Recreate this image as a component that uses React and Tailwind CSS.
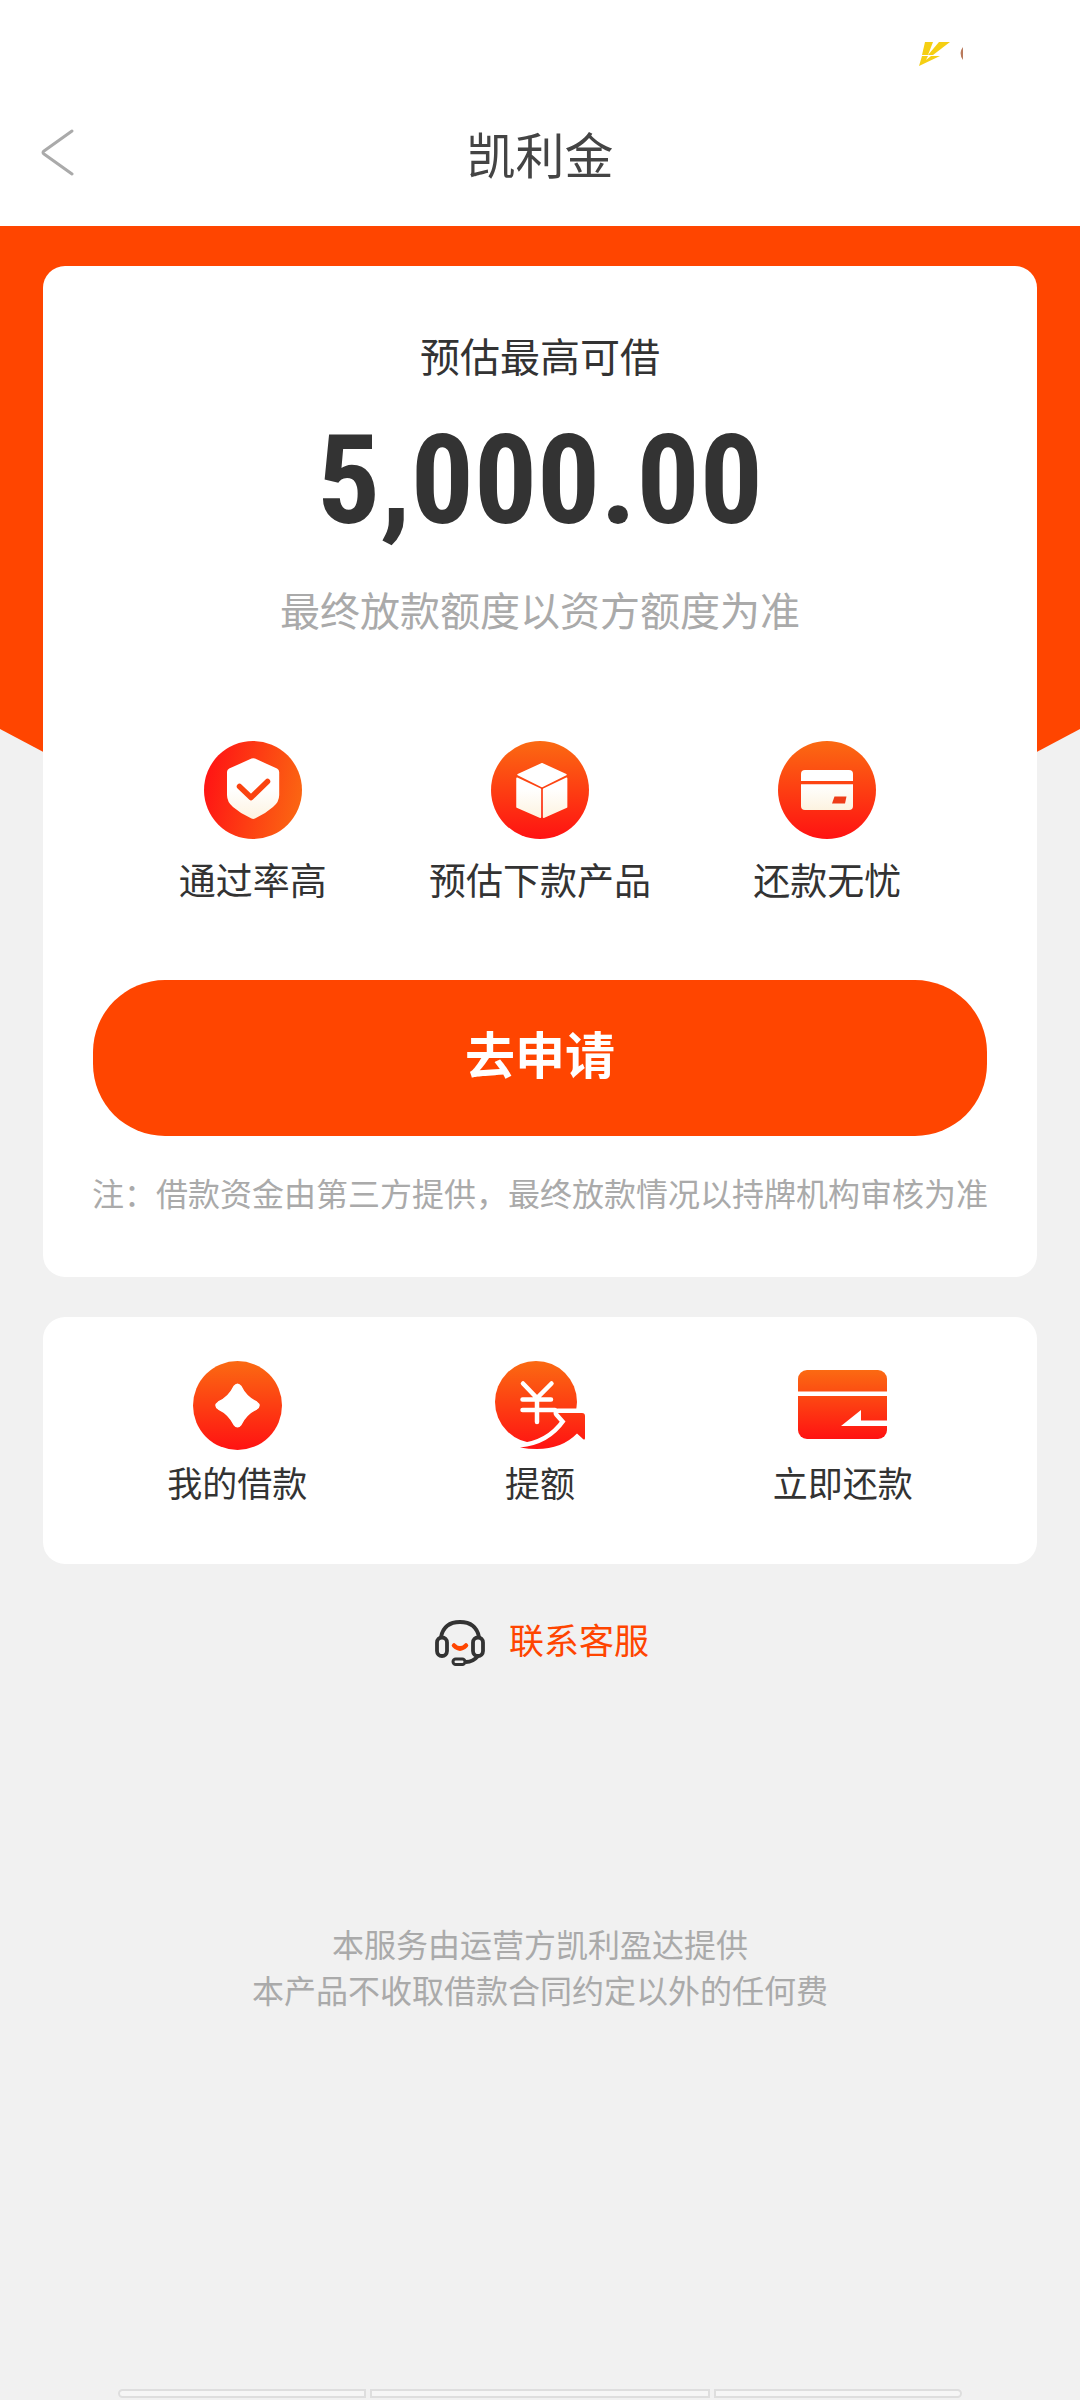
const features = [
  { label: "通过率高", Icon: ShieldIcon },
  { label: "预估下款产品", Icon: BoxIcon },
  { label: "还款无忧", Icon: CardIcon },
];

const shortcuts = [
  { label: "我的借款", Icon: CoinIcon },
  { label: "提额", Icon: RaiseIcon },
  { label: "立即还款", Icon: RepayIcon },
];

function ShieldIcon() {
  return (
    <svg className="size-[98px]" viewBox="0 0 98 98" aria-hidden="true">
      <defs>
        <linearGradient id="shieldBg" x1="0" y1="0.4" x2="1" y2="0.6">
          <stop offset="0" stopColor="#ff1414" />
          <stop offset="1" stopColor="#fb6612" />
        </linearGradient>
        <linearGradient id="shieldFg" x1="0" y1="0" x2="0" y2="1">
          <stop offset="0.5" stopColor="#fff" />
          <stop offset="1" stopColor="#fdf3e0" />
        </linearGradient>
      </defs>
      <circle cx="49" cy="49" r="49" fill="url(#shieldBg)" />
      <path
        d="M47.5 17.6Q49.2 16.8 51 17.6L73 27.5Q75.2 28.6 75.2 31V54Q75.2 61 69 66Q61 73 51 77.6Q49.2 78.5 47.5 77.6Q37 73 29 66Q23 61 23 54V31Q23 28.6 25.2 27.5Z"
        fill="url(#shieldFg)"
      />
      <path d="M35.5 45.5L47 56.5L63.5 40.5" fill="none" stroke="#fa4310" strokeWidth="5.5" strokeLinecap="round" strokeLinejoin="round" />
    </svg>
  );
}

function BoxIcon() {
  return (
    <svg className="size-[98px]" viewBox="0 0 98 98" aria-hidden="true">
      <defs>
        <linearGradient id="boxBg" x1="0" y1="0" x2="0" y2="1">
          <stop offset="0" stopColor="#fb6a12" />
          <stop offset="1" stopColor="#ff1212" />
        </linearGradient>
        <linearGradient id="boxFg" x1="0" y1="35" x2="0" y2="77" gradientUnits="userSpaceOnUse">
          <stop offset="0.3" stopColor="#fff" />
          <stop offset="1" stopColor="#fdf3e0" />
        </linearGradient>
      </defs>
      <circle cx="49" cy="49" r="49" fill="url(#boxBg)" />
      <g fill="url(#boxFg)" stroke="url(#boxFg)" strokeWidth="1.5" strokeLinejoin="round">
        <path d="M51 22.8L75 33.7L51 45.5L27 33.7Z" />
        <path d="M26 37.3L49.4 48.3V76.3L26 66Z" />
        <path d="M75.6 37.3L52.6 48.3V76.3L75.6 66Z" />
      </g>
    </svg>
  );
}

function CardIcon() {
  return (
    <svg className="size-[98px]" viewBox="0 0 98 98" aria-hidden="true">
      <defs>
        <linearGradient id="cardFg" x1="0" y1="0" x2="0" y2="1">
          <stop offset="0" stopColor="#fff" />
          <stop offset="1" stopColor="#fdf3e0" />
        </linearGradient>
      </defs>
      <circle cx="49" cy="49" r="49" fill="url(#boxBg)" />
      <path d="M23 40V33Q23 29 27 29H71Q75 29 75 33V40Z" fill="#fff" />
      <path d="M23 43.3H75V65Q75 69 71 69H27Q23 69 23 65Z" fill="url(#cardFg)" />
      <path d="M56.5 55.5H68.5L67 62.5H54Z" fill="#ee3c18" />
    </svg>
  );
}

function CoinIcon() {
  return (
    <svg className="size-[89px]" viewBox="0 0 89 89" aria-hidden="true">
      <circle cx="44.5" cy="44.5" r="44.5" fill="url(#boxBg)" />
      <path
        d="M41 25.5Q44.5 21 48 25.5Q53 36 63.5 41Q68.500 44.5 63.5 48Q53 53 48 63.5Q44.5 68 41 63.5Q36 53 25.5 48Q20.5 44.5 25.5 41Q36 36 41 25.5Z"
        fill="#fff"
        stroke="#fff"
        strokeWidth="1.5"
      />
    </svg>
  );
}

function RaiseIcon() {
  return (
    <svg className="h-[89px] w-[90px]" viewBox="0 0 90 89" aria-hidden="true">
      <defs>
        <linearGradient id="raiseBg" x1="0" y1="0" x2="0" y2="89" gradientUnits="userSpaceOnUse">
          <stop offset="0" stopColor="#fb6a12" />
          <stop offset="1" stopColor="#ff1212" />
        </linearGradient>
      </defs>
      <circle cx="41" cy="41" r="41" fill="url(#raiseBg)" />
      <path
        d="M63 52H87Q90 52 90 55V77Q90 79.5 88 78L82 72.5Q62 93 25 86.5Q54 84 70.5 60.5Z"
        fill="none"
        stroke="#fff"
        strokeWidth="9"
        strokeLinejoin="round"
      />
      <path d="M63 52H87Q90 52 90 55V77Q90 79.5 88 78L82 72.5Q62 93 25 86.5Q54 84 70.5 60.5Z" fill="url(#raiseBg)" />
      <path
        d="M28 22.5L42 37L56.5 22.5M27.5 38.5H56M27.5 49H60M42 38V61"
        fill="none"
        stroke="#fff"
        strokeWidth="4.5"
        strokeLinecap="round"
      />
    </svg>
  );
}

function RepayIcon() {
  return (
    <svg className="size-[89px]" viewBox="0 0 89 89" aria-hidden="true">
      <rect y="9" width="89" height="69" rx="9" fill="url(#boxBg)" />
      <path d="M0 30.5H89V35H0Z" fill="#fff" />
      <path d="M43 65L63 49V59.5H89V65Z" fill="#fff" />
    </svg>
  );
}

function HeadsetIcon() {
  return (
    <svg className="h-[46px] w-[50px]" viewBox="0 0 50 46" fill="none" aria-hidden="true">
      <g stroke="#333" strokeWidth="3.8">
        <path d="M6 17C8 7 15 2 25 2S42 7 44 17" />
        <rect x="2" y="17.5" width="10" height="18.5" rx="5" />
        <rect x="38" y="17.5" width="10" height="18.5" rx="5" />
        <path d="M43 36Q38 42 31 42" />
        <rect x="18" y="39" width="12" height="5.5" rx="2.7" strokeWidth="3" />
      </g>
      <path d="M19 25.5Q25 31.5 31 25.5" stroke="#ff4500" strokeWidth="4.5" strokeLinecap="round" />
    </svg>
  );
}

function StatusMarks() {
  return (
    <svg className="h-6 w-[46px]" viewBox="0 0 46 24" aria-hidden="true">
      <path d="M6 0H14L9 13H3Z" fill="#f5cf13" />
      <path d="M20 0H31L14 13H9Z" fill="#f5cf13" />
      <path d="M3 14H9L7 18L12 14H21L0 24Z" fill="#f5cf13" />
      <path d="M44 5Q39 11 44 18Z" fill="#b97a5c" />
    </svg>
  );
}

function IconItem({ label, Icon, className }) {
  return (
    <li className={`flex flex-1 flex-col items-center ${className}`}>
      <Icon />
      <span className="whitespace-nowrap">{label}</span>
    </li>
  );
}

export default function App() {
  return (
    <div className="flex min-h-screen flex-col bg-[#f1f1f1] font-['Noto_Sans_CJK_SC',sans-serif] text-[#333]">
      <header className="bg-white">
        <div className="flex justify-end pt-[42px] pr-[115px]">
          <StatusMarks />
        </div>
        <div className="grid grid-cols-[1fr_auto_1fr] items-center px-10 pt-[51px] pb-[37px]">
          <button type="button" aria-label="返回" className="justify-self-start">
            <svg className="h-12 w-9" viewBox="0 0 36 48" fill="none" stroke="#aaa" strokeWidth="3" strokeLinecap="round" strokeLinejoin="round">
              <path d="M32 2L4 22Q2 23.5 4 25L32 45" />
            </svg>
          </button>
          <h1 className="text-[49px] leading-[72px] text-[#444]">凯利金</h1>
        </div>
      </header>

      <main className="flex flex-1 flex-col">
        <section className="grid">
          <svg className="col-start-1 row-start-1 h-[560px] w-full" viewBox="0 0 1080 560" preserveAspectRatio="none" aria-hidden="true">
            <path d="M0 0H1080V503L980 556H100L0 503Z" fill="#ff4500" />
          </svg>
          <div className="z-10 col-start-1 row-start-1 mx-[43px] mt-10 rounded-[22px] bg-white px-[50px] pt-[59px] pb-[61px] text-center">
            <p className="text-[40px] leading-[60px]">预估最高可借</p>
            <p className="mt-[34px] font-['Roboto_Condensed','Roboto',sans-serif] text-[125px] leading-[124px] font-bold">5,000.00</p>
            <p className="mt-9 text-[40px] leading-[60px] text-[#aaa]">最终放款额度以资方额度为准</p>
            <ul className="mx-4 mt-[102px] flex text-[37px] leading-[56px]">
              {features.map((item) => (
                <IconItem key={item.label} label={item.label} Icon={item.Icon} className="gap-3" />
              ))}
            </ul>
            <button type="button" className="mt-[73px] h-[156px] w-full rounded-[72px] bg-[#ff4500] pb-3 text-[50px] font-bold text-white">
              去申请
            </button>
            <p className="-mx-2 mt-8 text-[32px] leading-[48px] text-[#aaa]">
              注：借款资金由第三方提供，最终放款情况以持牌机构审核为准
            </p>
          </div>
        </section>

        <ul className="mx-[43px] mt-10 flex rounded-[22px] bg-white px-[43px] pt-11 pb-[58px] text-[35px] leading-[48px]">
          {shortcuts.map((item) => (
            <IconItem key={item.label} label={item.label} Icon={item.Icon} className="gap-2" />
          ))}
        </ul>

        <a href="#service" className="mt-[56px] flex items-start justify-center gap-6 self-center pl-1 text-[35px] leading-[46px] text-[#ff4500]">
          <HeadsetIcon />
          <span className="-mt-1">联系客服</span>
        </a>

        <footer className="mt-[254px] text-center text-[32px] leading-[46px] text-[#aaa]">
          <p>本服务由运营方凯利盈达提供</p>
          <p>本产品不收取借款合同约定以外的任何费</p>
        </footer>
      </main>

      <div className="mx-[118px] mb-[2px] flex gap-1">
        <div className="h-[9px] flex-[247] rounded-l-md border-2 border-[#dedede] bg-[#f6f6f6]" />
        <div className="h-[9px] flex-[339] border-2 border-[#dedede] bg-[#f6f6f6]" />
        <div className="h-[9px] flex-[247] rounded-r-md border-2 border-[#dedede] bg-[#f6f6f6]" />
      </div>
    </div>
  );
}
